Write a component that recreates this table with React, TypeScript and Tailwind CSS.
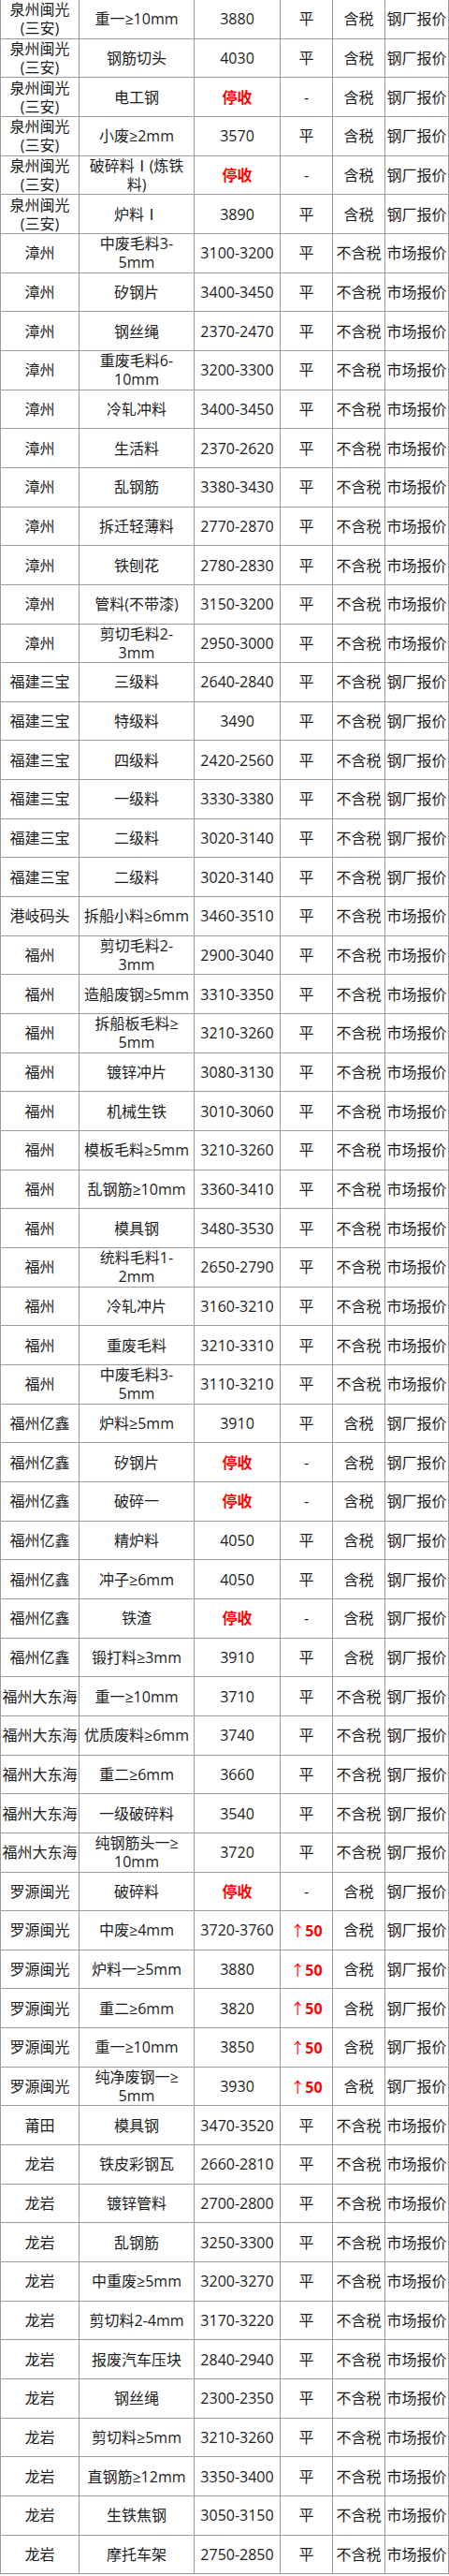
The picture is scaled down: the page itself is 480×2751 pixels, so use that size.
import React from "react";

type Row = [string, string, string, string, string, string];

const QZ = "泉州闽光\n(三安)";
const ZZ = "漳州";
const SB = "福建三宝";
const FZ = "福州";
const YX = "福州亿鑫";
const DH = "福州大东海";
const LY = "罗源闽光";
const LYN = "龙岩";

const rows: Row[] = [
  [QZ, "重一≥10mm", "3880", "平", "含税", "钢厂报价"],
  [QZ, "钢筋切头", "4030", "平", "含税", "钢厂报价"],
  [QZ, "电工钢", "停收", "-", "含税", "钢厂报价"],
  [QZ, "小废≥2mm", "3570", "平", "含税", "钢厂报价"],
  [QZ, "破碎料Ⅰ(炼铁\n料)", "停收", "-", "含税", "钢厂报价"],
  [QZ, "炉料Ⅰ", "3890", "平", "含税", "钢厂报价"],
  [ZZ, "中废毛料3-\n5mm", "3100-3200", "平", "不含税", "市场报价"],
  [ZZ, "矽钢片", "3400-3450", "平", "不含税", "市场报价"],
  [ZZ, "钢丝绳", "2370-2470", "平", "不含税", "市场报价"],
  [ZZ, "重废毛料6-\n10mm", "3200-3300", "平", "不含税", "市场报价"],
  [ZZ, "冷轧冲料", "3400-3450", "平", "不含税", "市场报价"],
  [ZZ, "生活料", "2370-2620", "平", "不含税", "市场报价"],
  [ZZ, "乱钢筋", "3380-3430", "平", "不含税", "市场报价"],
  [ZZ, "拆迁轻薄料", "2770-2870", "平", "不含税", "市场报价"],
  [ZZ, "铁刨花", "2780-2830", "平", "不含税", "市场报价"],
  [ZZ, "管料(不带漆)", "3150-3200", "平", "不含税", "市场报价"],
  [ZZ, "剪切毛料2-\n3mm", "2950-3000", "平", "不含税", "市场报价"],
  [SB, "三级料", "2640-2840", "平", "不含税", "钢厂报价"],
  [SB, "特级料", "3490", "平", "不含税", "钢厂报价"],
  [SB, "四级料", "2420-2560", "平", "不含税", "钢厂报价"],
  [SB, "一级料", "3330-3380", "平", "不含税", "钢厂报价"],
  [SB, "二级料", "3020-3140", "平", "不含税", "钢厂报价"],
  [SB, "二级料", "3020-3140", "平", "不含税", "钢厂报价"],
  ["港岐码头", "拆船小料≥6mm", "3460-3510", "平", "不含税", "市场报价"],
  [FZ, "剪切毛料2-\n3mm", "2900-3040", "平", "不含税", "市场报价"],
  [FZ, "造船废钢≥5mm", "3310-3350", "平", "不含税", "市场报价"],
  [FZ, "拆船板毛料≥\n5mm", "3210-3260", "平", "不含税", "市场报价"],
  [FZ, "镀锌冲片", "3080-3130", "平", "不含税", "市场报价"],
  [FZ, "机械生铁", "3010-3060", "平", "不含税", "市场报价"],
  [FZ, "模板毛料≥5mm", "3210-3260", "平", "不含税", "市场报价"],
  [FZ, "乱钢筋≥10mm", "3360-3410", "平", "不含税", "市场报价"],
  [FZ, "模具钢", "3480-3530", "平", "不含税", "市场报价"],
  [FZ, "统料毛料1-\n2mm", "2650-2790", "平", "不含税", "市场报价"],
  [FZ, "冷轧冲片", "3160-3210", "平", "不含税", "市场报价"],
  [FZ, "重废毛料", "3210-3310", "平", "不含税", "市场报价"],
  [FZ, "中废毛料3-\n5mm", "3110-3210", "平", "不含税", "市场报价"],
  [YX, "炉料≥5mm", "3910", "平", "含税", "钢厂报价"],
  [YX, "矽钢片", "停收", "-", "含税", "钢厂报价"],
  [YX, "破碎一", "停收", "-", "含税", "钢厂报价"],
  [YX, "精炉料", "4050", "平", "含税", "钢厂报价"],
  [YX, "冲子≥6mm", "4050", "平", "含税", "钢厂报价"],
  [YX, "铁渣", "停收", "-", "含税", "钢厂报价"],
  [YX, "锻打料≥3mm", "3910", "平", "含税", "钢厂报价"],
  [DH, "重一≥10mm", "3710", "平", "不含税", "钢厂报价"],
  [DH, "优质废料≥6mm", "3740", "平", "不含税", "钢厂报价"],
  [DH, "重二≥6mm", "3660", "平", "不含税", "钢厂报价"],
  [DH, "一级破碎料", "3540", "平", "不含税", "钢厂报价"],
  [DH, "纯钢筋头一≥\n10mm", "3720", "平", "不含税", "钢厂报价"],
  [LY, "破碎料", "停收", "-", "含税", "钢厂报价"],
  [LY, "中废≥4mm", "3720-3760", "↑50", "含税", "钢厂报价"],
  [LY, "炉料一≥5mm", "3880", "↑50", "含税", "钢厂报价"],
  [LY, "重二≥6mm", "3820", "↑50", "含税", "钢厂报价"],
  [LY, "重一≥10mm", "3850", "↑50", "含税", "钢厂报价"],
  [LY, "纯净废钢一≥\n5mm", "3930", "↑50", "含税", "钢厂报价"],
  ["莆田", "模具钢", "3470-3520", "平", "不含税", "市场报价"],
  [LYN, "铁皮彩钢瓦", "2660-2810", "平", "不含税", "市场报价"],
  [LYN, "镀锌管料", "2700-2800", "平", "不含税", "市场报价"],
  [LYN, "乱钢筋", "3250-3300", "平", "不含税", "市场报价"],
  [LYN, "中重废≥5mm", "3200-3270", "平", "不含税", "市场报价"],
  [LYN, "剪切料2-4mm", "3170-3220", "平", "不含税", "市场报价"],
  [LYN, "报废汽车压块", "2840-2940", "平", "不含税", "市场报价"],
  [LYN, "钢丝绳", "2300-2350", "平", "不含税", "市场报价"],
  [LYN, "剪切料≥5mm", "3210-3260", "平", "不含税", "市场报价"],
  [LYN, "直钢筋≥12mm", "3350-3400", "平", "不含税", "市场报价"],
  [LYN, "生铁焦钢", "3050-3150", "平", "不含税", "市场报价"],
  [LYN, "摩托车架", "2750-2850", "平", "不含税", "市场报价"],
];

const Cell = ({ children, first }: { children: React.ReactNode; first?: boolean }) => (
  <div
    className={
      "flex items-center justify-center text-center whitespace-pre-line leading-[20px] border-r border-b border-[#9a9a9a] overflow-visible " +
      (first ? "border-l" : "")
    }
  >
    {children}
  </div>
);

const Price = ({ v }: { v: string }) =>
  v === "停收" ? <span className="font-bold text-[#ff0000]">停收</span> : <span>{v}</span>;

const Change = ({ v }: { v: string }) =>
  v.startsWith("↑") ? (
    <span className="text-[#ff0000]">
      <span className="font-normal font-['Noto_Sans_CJK_SC',sans-serif]">↑</span>
      <span className="font-bold">{v.slice(1)}</span>
    </span>
  ) : (
    <span>{v}</span>
  );

export default function App() {
  return (
    <div className="w-[480px] bg-white text-[#1c1c1c] text-[16px] font-['Open_Sans','Noto_Sans_CJK_SC',sans-serif]">
      {rows.map((r, i) => (
        <div
          key={i}
          className="grid grid-cols-[85px_123px_92px_56px_56px_68px] h-[41.67px]"
        >
          <Cell first>{r[0]}</Cell>
          <Cell>{r[1]}</Cell>
          <Cell>
            <Price v={r[2]} />
          </Cell>
          <Cell>
            <Change v={r[3]} />
          </Cell>
          <Cell>{r[4]}</Cell>
          <Cell>
            <span className="whitespace-nowrap">{r[5]}</span>
          </Cell>
        </div>
      ))}
    </div>
  );
}
